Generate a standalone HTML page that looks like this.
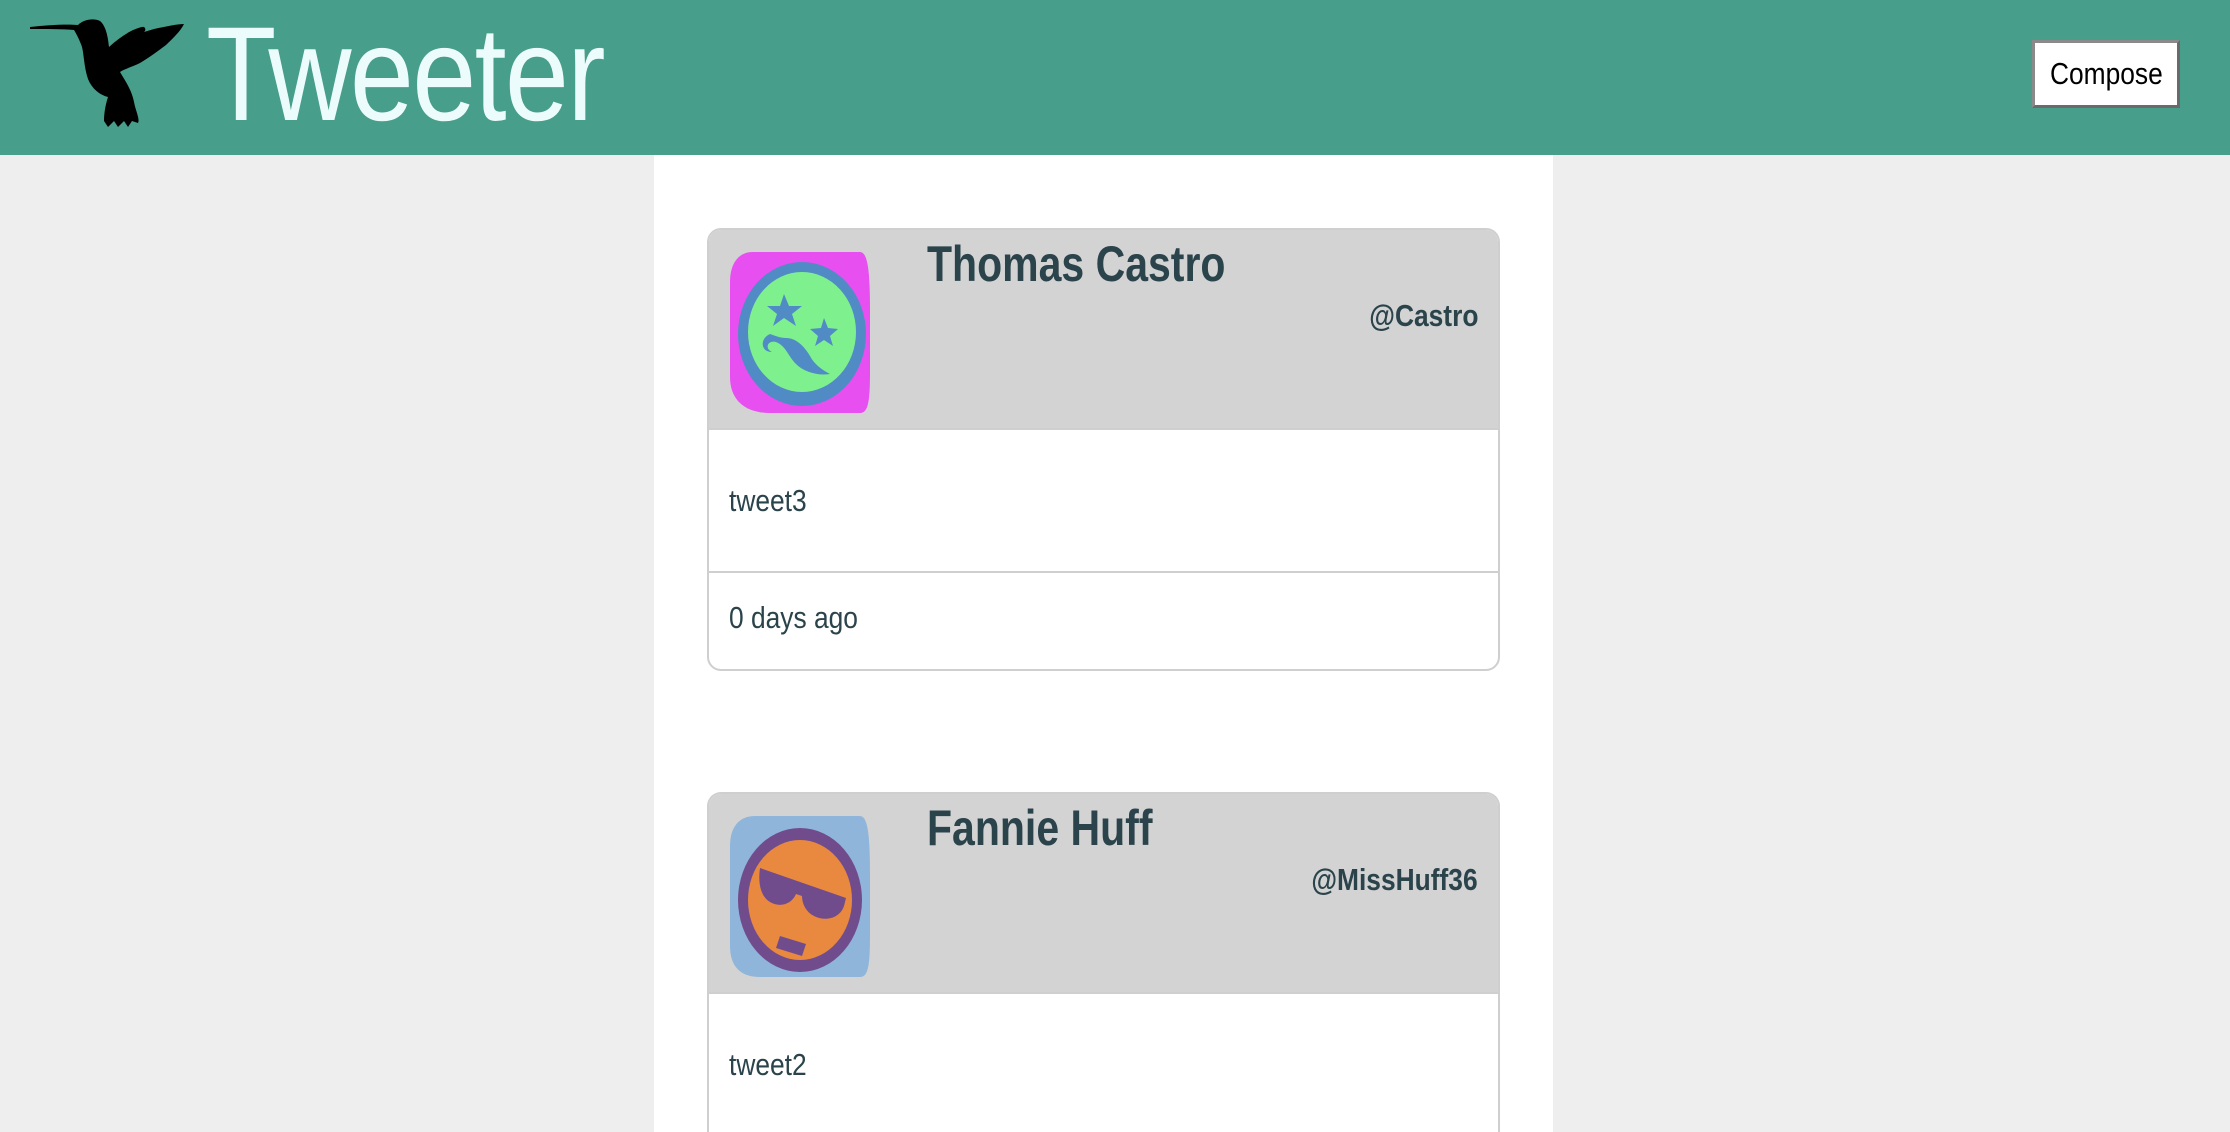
<!DOCTYPE html>
<html style="overflow:hidden;height:1132px"><head><meta charset="utf-8"><style>
*{margin:0;padding:0;box-sizing:border-box}
body{width:2230px;height:1132px;overflow:hidden;background:#eeeeee;font-family:"Liberation Sans",sans-serif;color:#2b434b;position:relative}
.hdr{position:absolute;left:0;top:0;width:2230px;height:155px;background:#479e8a}
.title{position:absolute;left:206px;top:0px;font-size:134px;line-height:150px;color:#ecfcfc;transform:scaleX(.86);transform-origin:left;font-weight:normal;letter-spacing:-2px}
.btn{position:absolute;left:2032px;top:40px;width:148px;height:68px;background:#fff;border:3px solid #8a8a8a;border-right-color:#6a6a6a;border-bottom-color:#6a6a6a;font-size:31px;line-height:62px;text-align:center;color:#000}
.btn span{display:inline-block;transform:scaleX(.85)}
.main{position:absolute;left:654px;top:155px;width:899px;height:977px;background:#fff}
.card{position:absolute;left:707px;width:793px;border:2px solid #cfcfcf;border-radius:14px;overflow:hidden;background:#fff}
.ch{height:200px;background:#d3d3d3;border-bottom:2px solid #cfcfcf;position:relative}
.av{position:absolute;left:21px;top:22px}
.name{position:absolute;left:218px;top:4px;font-size:50px;font-weight:bold;white-space:nowrap;transform:scaleX(.82);transform-origin:left;line-height:60px}
.handle{position:absolute;right:20px;top:66px;font-size:31px;font-weight:bold;white-space:nowrap;transform:scaleX(.85);transform-origin:right;line-height:40px}
.body{height:143px;border-bottom:2px solid #cfcfcf;font-size:31px;padding-left:20px;line-height:141px}
.body span,.foot span{display:inline-block;transform:scaleX(.85);transform-origin:left}
.foot{height:95px;font-size:31px;padding-left:20px;line-height:90px}
</style></head><body>
<div class="hdr">
<svg style="position:absolute;left:28px;top:17px" width="160" height="112" viewBox="0 0 160 112">
<path fill="#000" d="M2 10 C20 8 38 7 50 8 C56 2 66 1 72 4 C78 9 80 20 81 30 C92 20 104 12 114 10 C118 9 118 14 116 15 L126 12 C140 9 150 7 156 7 C152 15 144 22 138 28 C130 34 122 40 112 46 C104 50 96 52 92 55 C98 65 104 74 106 85 C108 95 112 102 110 106 L104 104 L100 110 L96 104 L90 110 L86 104 L80 110 L76 104 C76 95 78 86 80 80 C72 78 64 72 60 62 C56 50 56 38 54 30 C52 24 48 16 46 13 C34 12 18 12 2 12 Z"/>
</svg>
<div class="title">Tweeter</div>
<div class="btn"><span>Compose</span></div>
</div>
<div class="main"></div>

<div class="card" style="top:228px;height:443px">
<div class="ch">
<svg class="av" width="140" height="161" viewBox="0 0 140 161">
<path fill="#e84ff0" d="M22 0 H130 C138 0 140 20 140 60 V120 C140 150 138 161 130 161 H40 C15 161 0 148 0 125 V30 C0 10 10 0 22 0 Z"/>
<ellipse cx="72" cy="82" rx="64" ry="72" fill="#508bc6"/>
<ellipse cx="72" cy="80" rx="54" ry="60" fill="#7ef18e"/>
<polygon fill="#508bc6" points="54,42 59,54 72,54 62,62 66,74 54,66 43,74 47,62 37,54 50,54"/>
<polygon fill="#508bc6" points="94,66 98,76 108,77 100,84 103,94 94,88 85,94 88,84 80,77 91,76"/>
<path fill="#508bc6" d="M40 82 C30 86 30 100 42 100 C34 96 38 88 46 90 C56 94 58 104 66 112 C74 120 88 124 100 122 C92 118 84 112 80 104 C74 94 66 86 56 86 C50 86 46 84 40 82 Z"/>
</svg>
<div class="name">Thomas Castro</div>
<div class="handle">@Castro</div>
</div>
<div class="body"><span>tweet3</span></div>
<div class="foot"><span>0 days ago</span></div>
</div>

<div class="card" style="top:792px;height:340px;border-bottom:none;border-radius:14px 14px 0 0">
<div class="ch">
<svg class="av" width="140" height="161" viewBox="0 0 140 161">
<path fill="#8fb6da" d="M25 0 H130 C138 0 140 20 140 60 V120 C140 150 138 161 130 161 H30 C10 161 0 150 0 130 V30 C0 10 10 0 25 0 Z"/>
<ellipse cx="70" cy="84" rx="62" ry="72" fill="#714c8c"/>
<ellipse cx="70" cy="84" rx="52" ry="60" fill="#e8893f"/>
<path fill="#714c8c" d="M30 52 L116 82 L114 90 C110 102 96 106 84 100 C76 96 72 88 72 80 L66 78 C62 88 50 92 40 86 C30 80 28 66 30 52 Z"/>
<path fill="#714c8c" d="M50 120 L76 128 L72 140 L46 132 Z"/>
</svg>
<div class="name">Fannie Huff</div>
<div class="handle">@MissHuff36</div>
</div>
<div class="body"><span>tweet2</span></div>
</div>
</body></html>
